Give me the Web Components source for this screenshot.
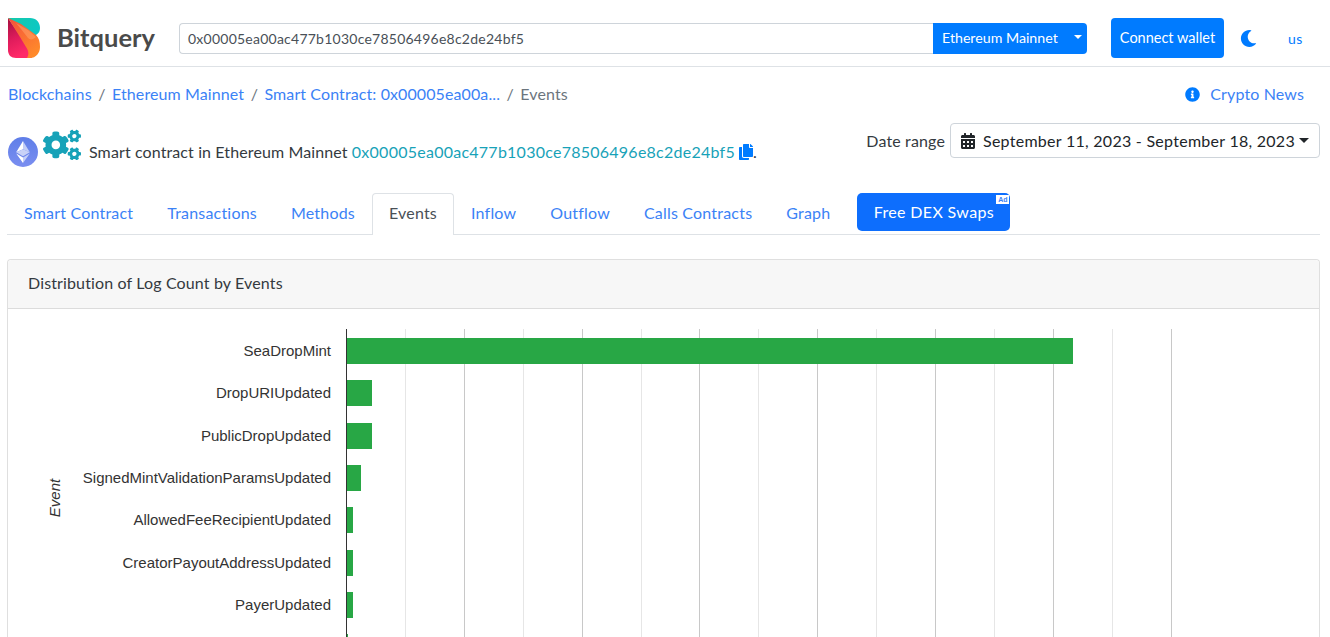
<!DOCTYPE html>
<html lang="en">
<head>
<meta charset="utf-8">
<title>Bitquery</title>
<style>
html, body { margin: 0; height: 637px; overflow: hidden; background: #fff; }
body { font: 16px/1.5 "Lato", "Noto Sans", sans-serif; letter-spacing: .14px; color: #343a40; }
</style>
</head>
<body>
<bq-header></bq-header>
<bq-breadcrumb></bq-breadcrumb>
<bq-contract></bq-contract>
<bq-tabs></bq-tabs>
<bq-card heading="Distribution of Log Count by Events"><bq-event-chart></bq-event-chart></bq-card>

<script>
const ICONS = {
  moon: ["0 0 512 512", "M283.211 512c78.962 0 151.079-35.925 198.857-94.792 7.068-8.708-.639-21.43-11.562-19.35-124.203 23.654-238.262-71.576-238.262-196.954 0-72.222 38.662-138.635 101.498-174.394 9.686-5.512 7.25-20.197-3.756-22.23A258.156 258.156 0 0 0 283.211 0c-141.309 0-256 114.511-256 256 0 141.309 114.511 256 256 256z"],
  info: ["0 0 512 512", "M256 8C119.043 8 8 119.083 8 256c0 136.997 111.043 248 248 248s248-111.003 248-248C504 119.083 392.957 8 256 8zm0 110c23.196 0 42 18.804 42 42s-18.804 42-42 42-42-18.804-42-42 18.804-42 42-42zm56 254c0 6.627-5.373 12-12 12h-88c-6.627 0-12-5.373-12-12v-24c0-6.627 5.373-12 12-12h12v-64h-12c-6.627 0-12-5.373-12-12v-24c0-6.627 5.373-12 12-12h64c6.627 0 12 5.373 12 12v100h12c6.627 0 12 5.373 12 12v24z"],
  calendar: ["0 0 448 512", "M0 464c0 26.5 21.5 48 48 48h352c26.5 0 48-21.5 48-48V192H0v272zm320-196c0-6.6 5.4-12 12-12h40c6.6 0 12 5.4 12 12v40c0 6.6-5.4 12-12 12h-40c-6.6 0-12-5.4-12-12v-40zm0 128c0-6.6 5.4-12 12-12h40c6.6 0 12 5.4 12 12v40c0 6.6-5.4 12-12 12h-40c-6.6 0-12-5.4-12-12v-40zM192 268c0-6.6 5.4-12 12-12h40c6.6 0 12 5.4 12 12v40c0 6.6-5.4 12-12 12h-40c-6.6 0-12-5.4-12-12v-40zm0 128c0-6.6 5.4-12 12-12h40c6.6 0 12 5.4 12 12v40c0 6.6-5.4 12-12 12h-40c-6.6 0-12-5.4-12-12v-40zM64 268c0-6.6 5.4-12 12-12h40c6.6 0 12 5.4 12 12v40c0 6.6-5.4 12-12 12H76c-6.6 0-12-5.4-12-12v-40zm0 128c0-6.6 5.4-12 12-12h40c6.6 0 12 5.4 12 12v40c0 6.6-5.4 12-12 12H76c-6.6 0-12-5.4-12-12v-40zM400 64h-48V16c0-8.8-7.2-16-16-16h-32c-8.8 0-16 7.2-16 16v48H160V16c0-8.8-7.2-16-16-16h-32c-8.8 0-16 7.2-16 16v48H48C21.5 64 0 85.5 0 112v48h448v-48c0-26.5-21.5-48-48-48z"],
  copy: ["0 0 448 512", "M320 448v40c0 13.255-10.745 24-24 24H24c-13.255 0-24-10.745-24-24V120c0-13.255 10.745-24 24-24h72v296c0 30.879 25.121 56 56 56h168zm0-344V0H152c-13.255 0-24 10.745-24 24v368c0 13.255 10.745 24 24 24h272c13.255 0 24-10.745 24-24V128H344c-13.2 0-24-10.8-24-24zm120.971-31.029L375.029 7.029A24 24 0 0 0 358.059 0H352v96h96v-6.059a24 24 0 0 0-7.029-16.97z"],
  cogs: ["0 0 640 512", "M512.1 191l-8.2 14.3c-3 5.3-9.4 7.5-15.1 5.4-11.8-4.4-22.6-10.7-32.1-18.6-4.6-3.8-5.8-10.5-2.8-15.7l8.2-14.3c-6.9-8-12.3-17.3-15.9-27.4h-16.5c-6 0-11.2-4.3-12.2-10.3-2-12-2.1-24.6 0-37.1 1-6 6.2-10.4 12.2-10.4h16.5c3.6-10.1 9-19.4 15.9-27.4l-8.2-14.3c-3-5.2-1.9-11.9 2.8-15.7 9.5-7.9 20.4-14.2 32.1-18.6 5.7-2.1 12.1.1 15.1 5.4l8.2 14.3c10.5-1.9 21.2-1.9 31.7 0L552 6.3c3-5.3 9.4-7.5 15.1-5.4 11.8 4.4 22.6 10.7 32.1 18.6 4.6 3.8 5.8 10.5 2.8 15.7l-8.2 14.3c6.9 8 12.3 17.3 15.9 27.4h16.5c6 0 11.2 4.3 12.2 10.3 2 12 2.1 24.6 0 37.1-1 6-6.2 10.4-12.2 10.4h-16.5c-3.6 10.1-9 19.4-15.9 27.4l8.2 14.3c3 5.2 1.9 11.9-2.8 15.7-9.5 7.9-20.4 14.2-32.1 18.6-5.7 2.1-12.1-.1-15.1-5.4l-8.2-14.3c-10.4 1.9-21.2 1.9-31.7 0zm-10.5-58.8c38.5 29.6 82.4-14.3 52.8-52.8-38.5-29.7-82.4 14.3-52.8 52.8zM386.3 286.1l33.7 16.8c10.1 5.8 14.5 18.1 10.5 29.1-8.9 24.2-26.4 46.4-42.6 65.8-7.4 8.9-20.2 11.1-30.3 5.3l-29.1-16.8c-16 13.7-34.6 24.6-54.9 31.7v33.6c0 11.6-8.3 21.6-19.7 23.6-24.6 4.2-50.4 4.4-75.9 0-11.5-2-20-11.9-20-23.6V418c-20.3-7.2-38.9-18-54.9-31.7L74 403c-10 5.8-22.9 3.6-30.3-5.3-16.2-19.4-33.3-41.6-42.2-65.7-4-10.9.4-23.2 10.5-29.1l33.3-16.8c-3.9-20.9-3.9-42.4 0-63.4L12 205.8c-10.1-5.8-14.6-18.1-10.5-29 8.9-24.2 26-46.4 42.2-65.8 7.4-8.9 20.2-11.1 30.3-5.3l29.1 16.8c16-13.7 34.6-24.6 54.9-31.7V57.1c0-11.5 8.2-21.5 19.6-23.5 24.6-4.2 50.5-4.4 76-.1 11.5 2 20 11.9 20 23.6v33.6c20.3 7.2 38.9 18 54.9 31.7l29.1-16.8c10-5.8 22.9-3.6 30.3 5.3 16.2 19.4 33.2 41.6 42.1 65.8 4 10.9.1 23.2-10 29.1l-33.7 16.8c3.9 21 3.9 42.5 0 63.5zm-117.6 21.1c59.2-77-28.7-164.9-105.7-105.7-59.2 77 28.7 164.9 105.7 105.7zm243.4 182.7l-8.2 14.3c-3 5.3-9.4 7.5-15.1 5.4-11.8-4.4-22.6-10.7-32.1-18.6-4.6-3.8-5.8-10.5-2.8-15.7l8.2-14.3c-6.9-8-12.3-17.3-15.9-27.4h-16.5c-6 0-11.2-4.3-12.2-10.3-2-12-2.1-24.6 0-37.1 1-6 6.2-10.4 12.2-10.4h16.5c3.6-10.1 9-19.4 15.9-27.4l-8.2-14.3c-3-5.2-1.9-11.9 2.8-15.7 9.5-7.9 20.4-14.2 32.1-18.6 5.7-2.1 12.1.1 15.1 5.4l8.2 14.3c10.5-1.9 21.2-1.9 31.7 0l8.2-14.3c3-5.3 9.4-7.5 15.1-5.4 11.8 4.4 22.6 10.7 32.1 18.6 4.6 3.8 5.8 10.5 2.8 15.7l-8.2 14.3c6.9 8 12.3 17.3 15.9 27.4h16.5c6 0 11.2 4.3 12.2 10.3 2 12 2.1 24.6 0 37.1-1 6-6.2 10.4-12.2 10.4h-16.5c-3.6 10.1-9 19.4-15.9 27.4l8.2 14.3c3 5.2 1.9 11.9-2.8 15.7-9.5 7.9-20.4 14.2-32.1 18.6-5.7 2.1-12.1-.1-15.1-5.4l-8.2-14.3c-10.4 1.9-21.2 1.9-31.7 0zM501.6 431c38.5 29.6 82.4-14.3 52.8-52.8-38.5-29.6-82.4 14.3-52.8 52.8z"]
}
const icon = (name, w, h, color) => `<svg width="${w}" height="${h}" viewBox="${ICONS[name][0]}" style="display:block;flex:none"><path fill="${color}" d="${ICONS[name][1]}"/></svg>`

class BqHeader extends HTMLElement {
  constructor() {
    super()
    this.attachShadow({ mode: "open" }).innerHTML = `
<style>
:host { display: flex; align-items: center; height: 56px; padding: 10px 0 0 8px; border-bottom: 1px solid #dee2e6; }
.logo { display: flex; align-items: center; gap: 17px; width: 171px; flex: none; }
.word { font: 700 25.5px/1 "Lato", sans-serif; color: #4a4a4a; letter-spacing: 0; }
.search { display: flex; width: 908px; height: 31px; flex: none; }
.addr { flex: 1; border: 1px solid #ced4da; border-right: 0; border-radius: 4px 0 0 4px; padding: 0 8px; font-size: 14px; letter-spacing: .24px; line-height: 29px; color: #495057; }
.net { width: 154px; background: #007bff; color: #fff; border-radius: 0 4px 4px 0; display: flex; align-items: center; padding: 0 5px 0 9px; box-sizing: border-box; font-size: 14.2px; letter-spacing: 0; justify-content: space-between; }
.caret { width: 0; height: 0; border: 4.5px solid transparent; border-top-color: #fff; border-bottom: 0; margin-bottom: 3px; }
.wallet { margin-left: 24px; width: 113px; height: 40px; background: #007bff; color: #fff; border-radius: 4px; display: flex; align-items: center; justify-content: center; font-size: 14.5px; letter-spacing: 0; flex: none; }
.moon { margin-left: 16px; }
.lang { margin-left: 31px; color: #007bff; font-size: 14px; letter-spacing: .4px; }
</style>
<div class="logo">
  <svg width="32" height="40" viewBox="0 0 32 40">
    <defs>
      <linearGradient id="t" x1="0" y1="0" x2="1" y2=".3"><stop offset="0" stop-color="#17c9a8"/><stop offset="1" stop-color="#0cc8c4"/></linearGradient>
      <linearGradient id="o" x1="0" y1="0" x2=".7" y2="1"><stop offset="0" stop-color="#f4503c"/><stop offset="1" stop-color="#ff8a2a"/></linearGradient>
      <linearGradient id="p" x1="0" y1="0" x2=".3" y2="1"><stop offset="0" stop-color="#a3103f"/><stop offset=".55" stop-color="#e01c5c"/><stop offset="1" stop-color="#ff2a68"/></linearGradient>
    </defs>
    <path fill="url(#t)" d="M0 0H22C28 0 32 4 32 10C32 13 31 15 28 17L22 22Z"/>
    <path fill="url(#p)" d="M0 0L14 20L20 30L24 40H8C3 40 0 37 0 32Z"/>
    <path fill="url(#o)" d="M0 0L13 6L28 17C31 20 32 24 32 29C32 35 28 40 22 40H19C21 37 21 33 18 29L12 19Z"/>
    <path fill="#ffa368" opacity=".55" d="M8 5L20 12L28 19C25 22 22 22 20 20L13 11Z"/>
  </svg>
  <span class="word">Bitquery</span>
</div>
<div class="search">
  <div class="addr">0x00005ea00ac477b1030ce78506496e8c2de24bf5</div>
  <div class="net"><span>Ethereum Mainnet</span><span class="caret"></span></div>
</div>
<div class="wallet">Connect wallet</div>
<div class="moon">${icon("moon", 17, 17, "#007bff")}</div>
<div class="lang">us</div>`
  }
}

class BqBreadcrumb extends HTMLElement {
  constructor() {
    super()
    this.attachShadow({ mode: "open" }).innerHTML = `
<style>
:host { display: flex; justify-content: space-between; align-items: center; height: 24px; padding: 15px 26px 1px 8px; }
a { color: #3b82f6; text-decoration: none; }
.sep { color: #6c757d; padding: 0 6.5px; }
.cur { color: #6c757d; }
.news { display: flex; align-items: center; gap: 10px; }
.crumbs { letter-spacing: .1px; }
</style>
<div class="crumbs"><a>Blockchains</a><span class="sep">/</span><a>Ethereum Mainnet</a><span class="sep">/</span><a>Smart Contract: 0x00005ea00a...</a><span class="sep">/</span><span class="cur">Events</span></div>
<div class="news">${icon("info", 15, 15, "#007bff")}<a>Crypto News</a></div>`
  }
}

class BqContract extends HTMLElement {
  constructor() {
    super()
    this.attachShadow({ mode: "open" }).innerHTML = `
<style>
:host { display: flex; justify-content: space-between; height: 70px; padding: 16px 10px 0 8px; align-items: flex-start; }
.left { display: flex; align-items: flex-start; padding-top: 6px; }
.eth { margin-top: 8px; margin-right: 5px; }
.txt { margin: 11px 0 0 8px; white-space: nowrap; letter-spacing: .11px; }
.txt a { color: #17a2b8; letter-spacing: .25px; }
.copy { display: inline-block; vertical-align: -2px; margin-left: 4px; }
.right { display: flex; align-items: center; gap: 5px; }
.range { display: flex; align-items: center; gap: 8px; width: 370px; height: 35px; box-sizing: border-box; border: 1px solid #ced4da; border-radius: 4px; padding: 0 10px; white-space: nowrap; color: #212529; letter-spacing: .27px; }
.caret { width: 0; height: 0; border: 5px solid transparent; border-top-color: #212529; border-bottom: 0; margin-left: -4px; }
</style>
<div class="left">
  <svg class="eth" width="30" height="30" viewBox="0 0 30 30">
    <defs><linearGradient id="e" x1="0" y1="0" x2="0" y2="1"><stop offset="0" stop-color="#5f7ee8"/><stop offset="1" stop-color="#7a8ef0"/></linearGradient></defs>
    <circle cx="15" cy="15" r="15" fill="url(#e)"/>
    <path fill="#fff" opacity=".6" d="M15 4v8.2l6.8 3z"/><path fill="#fff" d="M15 4L8.2 15.2l6.8-3z"/>
    <path fill="#fff" opacity=".6" d="M15 20.6V26l6.8-9.4z"/><path fill="#fff" d="M15 20.6V26L8.2 16.6z"/>
    <path fill="#c9d2f7" d="M15 19.3l6.8-4-6.8-3-6.8 3z"/>
  </svg>
  ${icon("cogs", 38, 32, "#17a2b8")}
  <div class="txt">Smart contract in Ethereum Mainnet <a>0x00005ea00ac477b1030ce78506496e8c2de24bf5</a><span class="copy">${icon("copy", 14, 16, "#007bff")}</span>.</div>
</div>
<div class="right">
  <span>Date range</span>
  <div class="range">${icon("calendar", 14, 16, "#212529")}<span>September 11, 2023 - September 18, 2023</span><span class="caret"></span></div>
</div>`
  }
}

class BqTabs extends HTMLElement {
  constructor() {
    super()
    this.attachShadow({ mode: "open" }).innerHTML = `
<style>
:host { display: flex; align-items: flex-start; height: 41px; margin: 0 10px 0 7px; border-bottom: 1px solid #dee2e6; }
a { height: 40px; box-sizing: border-box; padding: 0 16px; line-height: 38px; letter-spacing: .2px; color: #3b82f6; border: 1px solid transparent; border-bottom: 0; border-radius: 4px 4px 0 0; white-space: nowrap; }
a.on { color: #495057; background: #fff; border-color: #dee2e6; height: 42px; }
.ad { position: relative; margin-left: 10px; width: 153px; height: 38px; box-sizing: border-box; background: #0d6efd; color: #fff; border-radius: 5px; font-size: 16px; letter-spacing: .35px; display: flex; align-items: center; justify-content: center; }
.ad i { position: absolute; top: 2px; right: 1px; width: 13px; height: 9px; background: #fff; color: #3b82f6; font: 700 7px/9px "Liberation Sans", sans-serif; letter-spacing: 0; text-align: center; }
</style>
<a>Smart Contract</a><a>Transactions</a><a>Methods</a><a class="on">Events</a><a>Inflow</a><a>Outflow</a><a>Calls Contracts</a><a>Graph</a>
<div class="ad">Free DEX Swaps<i>Ad</i></div>`
  }
}

class BqCard extends HTMLElement {
  constructor() {
    super()
    this.attachShadow({ mode: "open" }).innerHTML = `
<style>
:host { display: block; margin: 24px 10px 0 7px; border: 1px solid #dfdfdf; border-bottom: 0; border-radius: 4px 4px 0 0; }
header { line-height: 46px; padding: 0 20px; background: #f7f7f7; border-bottom: 1px solid #dcdcdc; box-sizing: border-box; height: 49px; color: #343a40; border-radius: 4px 4px 0 0; }
</style>
<header>${this.getAttribute("heading")}</header>
<slot></slot>`
  }
}

class BqEventChart extends HTMLElement {
  constructor() {
    super()
    const rows = [
      ["SeaDropMint", 727], ["DropURIUpdated", 26], ["PublicDropUpdated", 26],
      ["SignedMintValidationParamsUpdated", 15], ["AllowedFeeRecipientUpdated", 7],
      ["CreatorPayoutAddressUpdated", 7], ["PayerUpdated", 7], ["", 2]
    ]
    // chart coords are relative to the card body: axis at x=338, top at y=20
    let grid = "", bars = ""
    for (let i = 1; i <= 14; i++) {
      const x = Math.round(338 + i * 58.9) + .5
      grid += `<line x1="${x}" x2="${x}" y1="20" y2="345" stroke="${i % 2 ? "#e6e6e6" : "#c8c8c8"}"/>`
    }
    rows.forEach(([name, w], i) => {
      const y = Math.round(29 + i * 42.3)
      bars += `<rect x="338" y="${y}" width="${w}" height="26" fill="#28a745"/>`
      if (name) bars += `<text x="323" y="${y + 18}" text-anchor="end">${name}</text>`
    })
    this.attachShadow({ mode: "open" }).innerHTML = `
<style>
:host { display: block; height: 345px; overflow: hidden; }
svg { display: block; font: 15px "Liberation Sans", Arial, sans-serif; letter-spacing: 0; fill: #333; }
</style>
<svg width="1311" height="345">
  ${grid}${bars}
  <line x1="338.5" x2="338.5" y1="20" y2="345" stroke="#333"/>
  <text transform="translate(52 189) rotate(-90)" text-anchor="middle" font-style="italic">Event</text>
</svg>`
  }
}

customElements.define("bq-header", BqHeader)
customElements.define("bq-breadcrumb", BqBreadcrumb)
customElements.define("bq-contract", BqContract)
customElements.define("bq-tabs", BqTabs)
customElements.define("bq-card", BqCard)
customElements.define("bq-event-chart", BqEventChart)
</script>
</body>
</html>
